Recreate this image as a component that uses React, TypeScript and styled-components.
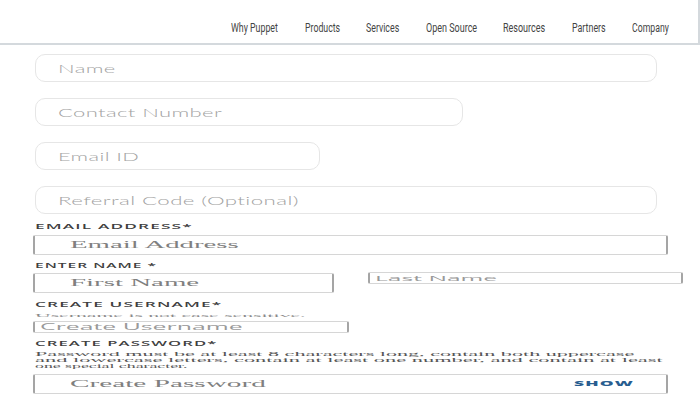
import React, { useLayoutEffect, useRef, useState } from "react";
import styled, { createGlobalStyle } from "styled-components";

const Global = createGlobalStyle`
  html, body { margin: 0; padding: 0; background: #ffffff; }
  body { font-family: Lato, "Open Sans", Arial, sans-serif; color: #333; }
  * { box-sizing: border-box; }
`;

const FitOuter = styled.span<{ $w: number }>`
  display: inline-block;
  width: ${(p) => p.$w}px;
  white-space: nowrap;
  overflow: visible;
`;

const FitInner = styled.span`
  display: inline-block;
  white-space: nowrap;
  transform-origin: left center;
`;

function Fit({ w, sy = 1, children }: { w: number; sy?: number; children: React.ReactNode }) {
  const ref = useRef<HTMLSpanElement>(null);
  const [sx, setSx] = useState(1);
  useLayoutEffect(() => {
    const measure = () => {
      const el = ref.current;
      if (el && el.offsetWidth) setSx(w / el.offsetWidth);
    };
    measure();
    if (document.fonts) document.fonts.ready.then(measure);
  }, [w]);
  return (
    <FitOuter $w={w}>
      <FitInner ref={ref} style={{ transform: `scale(${sx}, ${sy})` }}>
        {children}
      </FitInner>
    </FitOuter>
  );
}

const Header = styled.header`
  height: 45px;
  padding-top: 12px;
  display: flex;
  align-items: center;
  justify-content: flex-end;
  border-bottom: 2px solid #d4d9dd;
  border-right: 2px solid #d4d9dd;
`;

const Nav = styled.nav`
  display: flex;
  align-items: center;
  gap: 26.5px;
  padding-right: 29px;
`;

const NavLink = styled.a`
  font-family: Roboto, "Liberation Sans", sans-serif;
  font-size: 12px;
  color: #444;
  text-decoration: none;
  line-height: 14px;
`;

const Page = styled.main`
  padding: 9px 0 0 33px;
`;

const RoundList = styled.div`
  display: flex;
  flex-direction: column;
  gap: 16px;
  padding-left: 2px;
`;

const RoundField = styled.div<{ $w: number }>`
  width: ${(p) => p.$w}px;
  height: 28px;
  border: 1px solid #e6e6e6;
  border-radius: 10px;
  display: flex;
  align-items: center;
  padding-left: 22px;
  font-family: Lato, sans-serif;
  font-weight: 300;
  font-size: 11px;
  color: #a3a3a3;
  letter-spacing: 0.2px;
`;

const Legacy = styled.section`
  display: flex;
  flex-direction: column;
  padding-top: 8px;
`;

const Label = styled.div<{ $mt?: number }>`
  margin-top: ${(p) => p.$mt ?? 0}px;
  padding-left: 2px;
  height: 10px;
  line-height: 10px;
  font-family: "Open Sans", sans-serif;
  font-weight: 600;
  font-size: 9px;
  letter-spacing: 0.6px;
  color: #3f3f3f;
`;

const Box = styled.div<{ $w: number; $h: number; $pl: number; $mt?: number }>`
  margin-top: ${(p) => p.$mt ?? 0}px;
  width: ${(p) => p.$w}px;
  height: ${(p) => p.$h}px;
  border-top: 1px solid #d6d6d6;
  border-bottom: 1px solid #d6d6d6;
  border-left: 2px solid #a5a5a5;
  border-right: 2px solid #a5a5a5;
  border-radius: 2px;
  display: flex;
  align-items: center;
  justify-content: space-between;
  padding-left: ${(p) => p.$pl}px;
  padding-right: 33px;
  overflow: visible;
`;

const SerifHint = styled.span`
  font-family: "Liberation Serif", serif;
  font-size: 12px;
  line-height: 14px;
  color: #808080;
`;

const SansHint = styled.span`
  font-family: "Open Sans", sans-serif;
  font-size: 11px;
  line-height: 12px;
  color: #9a9a9a;
`;

const NameRow = styled.div`
  display: flex;
  align-items: flex-start;
  gap: 34px;
  margin-top: 1px;
`;

const Helper = styled.div<{ $mt?: number; $tone?: string }>`
  margin-top: ${(p) => p.$mt ?? 0}px;
  padding-left: 2px;
  font-family: "Liberation Serif", serif;
  font-size: 9px;
  line-height: 6px;
  height: 6px;
  color: ${(p) => p.$tone ?? "#555"};
`;

const HelperBlock = styled.div`
  display: flex;
  flex-direction: column;
  margin-top: 2px;
`;

const Show = styled.button`
  border: 0;
  background: none;
  padding: 0;
  margin-right: 13px;
  font-family: "Open Sans", sans-serif;
  font-weight: 800;
  font-size: 9px;
  letter-spacing: 0.6px;
  color: #285d90;
  line-height: 12px;
`;

const navItems: [string, number][] = [
  ["Why Puppet", 47],
  ["Products", 35],
  ["Services", 33],
  ["Open Source", 51],
  ["Resources", 42],
  ["Partners", 34],
  ["Company", 37],
];

export default function App() {
  return (
    <>
      <Global />
      <Header>
        <Nav>
          {navItems.map(([t, w]) => (
            <NavLink key={t} href="#">
              <Fit w={w}>{t}</Fit>
            </NavLink>
          ))}
        </Nav>
      </Header>
      <Page>
        <RoundList>
          <RoundField $w={622}>
            <Fit w={58}>Name</Fit>
          </RoundField>
          <RoundField $w={428}>
            <Fit w={164}>Contact Number</Fit>
          </RoundField>
          <RoundField $w={285}>
            <Fit w={81}>Email ID</Fit>
          </RoundField>
          <RoundField $w={622}>
            <Fit w={241}>Referral Code (Optional)</Fit>
          </RoundField>
        </RoundList>
        <Legacy>
          <Label>
            <Fit w={157} sy={0.75}>EMAIL ADDRESS*</Fit>
          </Label>
          <Box $w={635} $h={20} $pl={35} $mt={3}>
            <SerifHint>
              <Fit w={168} sy={0.8}>Email Address</Fit>
            </SerifHint>
          </Box>
          <Label $mt={6}>
            <Fit w={122} sy={0.75}>ENTER NAME *</Fit>
          </Label>
          <NameRow>
            <Box $w={301} $h={20} $pl={35} $mt={1}>
              <SerifHint>
                <Fit w={130} sy={0.8}>First Name</Fit>
              </SerifHint>
            </Box>
            <Box $w={315} $h={12} $pl={5}>
              <SansHint>
                <Fit w={123} sy={0.7}>Last Name</Fit>
              </SansHint>
            </Box>
          </NameRow>
          <Label $mt={7}>
            <Fit w={187} sy={0.75}>CREATE USERNAME*</Fit>
          </Label>
          <Helper $mt={2} $tone="#8a8a8a">
            <Fit w={270} sy={0.5}>Username is not case sensitive.</Fit>
          </Helper>
          <Box $w={316} $h={12} $pl={5} $mt={3}>
            <SansHint>
              <Fit w={203} sy={0.75}>Create Username</Fit>
            </SansHint>
          </Box>
          <Label $mt={6}>
            <Fit w={183} sy={0.75}>CREATE PASSWORD*</Fit>
          </Label>
          <HelperBlock>
            <Helper>
              <Fit w={600} sy={0.7}>Password must be at least 8 characters long, contain both uppercase</Fit>
            </Helper>
            <Helper>
              <Fit w={627} sy={0.7}>and lowercase letters, contain at least one number, and contain at least</Fit>
            </Helper>
            <Helper>
              <Fit w={152} sy={0.7}>one special character.</Fit>
            </Helper>
          </HelperBlock>
          <Box $w={635} $h={20} $pl={35} $mt={5}>
            <SerifHint>
              <Fit w={195} sy={0.8}>Create Password</Fit>
            </SerifHint>
            <Show type="button">
              <Fit w={60} sy={0.75}>SHOW</Fit>
            </Show>
          </Box>
        </Legacy>
      </Page>
    </>
  );
}
